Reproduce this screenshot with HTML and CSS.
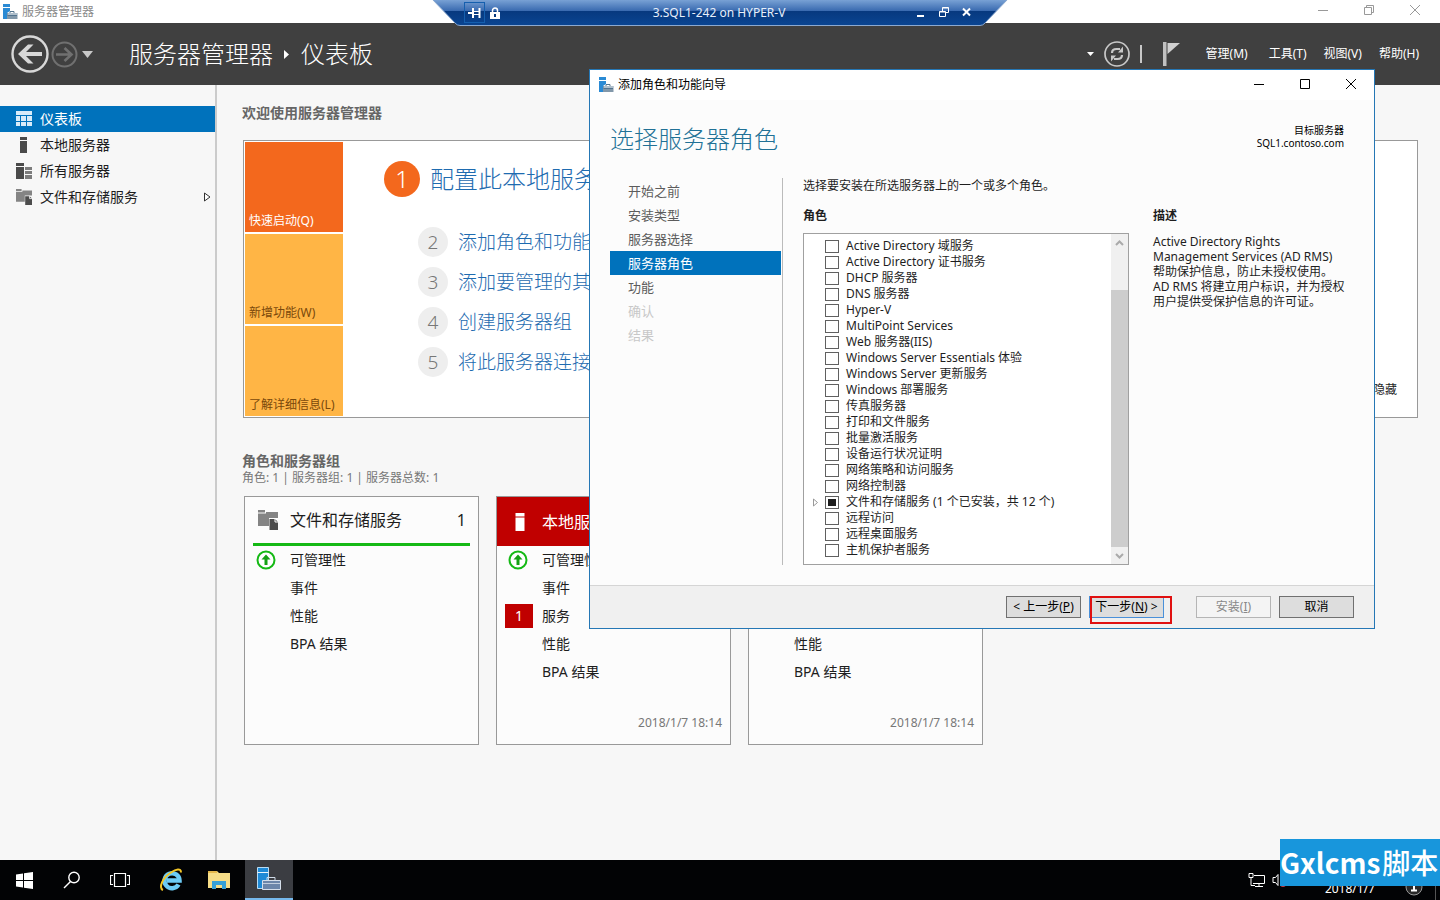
FILE: index.html
```html
<!DOCTYPE html>
<html lang="zh-CN">
<head>
<meta charset="utf-8">
<title>服务器管理器</title>
<link rel="stylesheet" href="styles.css">
</head>
<body>
<svg class="defs" aria-hidden="true">
  <symbol id="app" viewBox="0 0 16 16">
    <path d="M1 0h7v3H1z" fill="#2a8ad4"/><path d="M1 4h7v3L5 9v6H1z" fill="#2a8ad4"/>
    <path d="M5 9h10.500v6H5z" fill="#8298aa"/><path d="M5.500 11.500h9.500M8 9V7.500h4V9" fill="none" stroke="#53748f"/><path d="M6 10h9" stroke="#dce6ee"/>
  </symbol>
  <symbol id="storage" viewBox="0 0 20 20">
    <path d="M0 0h7v2.500H0zM0 3.500h8V2h12v6h-9v8H0z" fill="#848484"/>
    <path d="M11.500 9H17l3 3v8h-8.500z" fill="#4c4c4c"/><path d="M17 8.500V12h3.500" fill="none" stroke="#fff"/>
  </symbol>
  <symbol id="server" viewBox="0 0 8 16"><path d="M0 0h8v3H0zM0 4h8v12H0z" fill="currentColor"/></symbol>
  <symbol id="up" viewBox="0 0 20 20">
    <circle cx="10" cy="10" r="8.500" fill="#fff" stroke="#15b915" stroke-width="2"/>
    <path d="M10 4.500l4.500 5h-3V15h-3V9.500h-3z" fill="#15a015"/>
  </symbol>
</svg>

<div class="desktop">
  <header class="titlebar">
    <svg class="icon16" aria-hidden="true"><use href="#app"/></svg>
    <span class="titlebar-text">服务器管理器</span>
    <div class="win-controls">
      <button aria-label="最小化"><svg width="12" height="12"><path d="M1 6.500h10"/></svg></button>
      <button aria-label="还原"><svg width="12" height="12"><path d="M1.500 3.500h7v7h-7zM3.500 3V1.500h7v7H9"/></svg></button>
      <button aria-label="关闭"><svg width="12" height="12"><path d="M1 1l10 10M11 1L1 11"/></svg></button>
    </div>
  </header>

  <div class="rdp">
    <svg class="rdp-shape" viewBox="0 0 576 27" preserveAspectRatio="none" aria-hidden="true">
      <defs><linearGradient id="g" x1="0" y1="0" x2="0" y2="1">
        <stop offset="0" stop-color="#7ea6d8"/><stop offset=".46" stop-color="#3768ae"/>
        <stop offset=".47" stop-color="#07397f"/><stop offset="1" stop-color="#0a4592"/></linearGradient></defs>
      <path d="M0-1L23 23q2 2.500 5 2.500h520q3 0 5-2.500L576-1z" fill="url(#g)" stroke="#8ca9d0"/>
    </svg>
    <button class="pin" aria-label="固定"><svg width="13" height="10"><path d="M0 5h4M5 0v10M11.500 0v10" stroke="#fff" stroke-width="2" fill="none"/><path d="M5 3.500h6M5 6.500h6" stroke="#fff"/></svg></button>
    <svg class="lock" width="10" height="12" aria-hidden="true"><path d="M2.500 5V3.500a2.500 2.500 0 0 1 5 0V5" fill="none" stroke="#fff" stroke-width="1.500"/><path d="M0 5h10v7H0z" fill="#fff"/><path d="M4 7h2v3H4z" fill="#07397f"/></svg>
    <span class="rdp-title">3.SQL1-242 on HYPER-V</span>
    <div class="rdp-controls">
      <button aria-label="最小化连接"><svg width="10" height="12"><path d="M1 9h7" stroke="#fff" stroke-width="2"/></svg></button>
      <button aria-label="还原连接"><svg width="10" height="12"><path d="M.5 4.500h6v5h-6zM.5 5h6M3.500 4V.5h6v5H7M3.500 1h6" fill="none" stroke="#fff"/></svg></button>
      <button aria-label="断开连接"><svg width="10" height="12"><path d="M1 1.500l7 7M8 1.500l-7 7" stroke="#fff" stroke-width="2"/></svg></button>
    </div>
  </div>

  <div class="header">
    <button class="nav-back" aria-label="后退"><svg width="38" height="38"><circle cx="19" cy="19" r="17.500" fill="none" stroke="#d8d8d8" stroke-width="2.400"/><path d="M7 19L17 9.500h5.500L15 17h16v4H15l7.500 7.500H17z" fill="#d8d8d8"/></svg></button>
    <button class="nav-fwd" aria-label="前进"><svg width="27" height="27"><circle cx="13.500" cy="13.500" r="12" fill="none" stroke="#707070" stroke-width="2"/><path d="M5 13.500h15M13.500 7l7 6.500-7 6.500" fill="none" stroke="#707070" stroke-width="2.600"/></svg></button>
    <button class="nav-more" aria-label="历史记录"><svg width="11" height="7"><path d="M0 0h11L5.500 7z" fill="#c8c8c8"/></svg></button>
    <h1 class="crumbs"><span>服务器管理器</span><svg width="6" height="9" aria-hidden="true"><path d="M0 0l5 4.500L0 9z" fill="#fff"/></svg><span>仪表板</span></h1>
    <div class="header-tools">
      <button aria-label="更多"><svg width="7" height="4"><path d="M0 0h7L3.500 4z" fill="#fff"/></svg></button>
      <button aria-label="刷新"><svg width="26" height="26"><circle cx="13" cy="13" r="12" fill="none" stroke="#c8c8c8" stroke-width="1.700"/><path d="M8 12q0-4 4.500-4H16M18 14q0 4-4.500 4H10" fill="none" stroke="#c8c8c8" stroke-width="2.200"/><path d="M14 11.500h5v-6zM12 14.500H7v6z" fill="#c8c8c8"/></svg></button>
      <i class="tool-sep"></i>
      <button class="flag" aria-label="通知"><svg width="17" height="24"><path d="M0 0h3.500v24H0z" fill="#c0c0c0"/><path d="M4.500 1H17L4.500 12z" fill="#d0d0d0"/></svg></button>
    </div>
    <nav class="menu"><button class="first">管理(M)</button><button>工具(T)</button><button>视图(V)</button><button>帮助(H)</button></nav>
  </div>

  <div class="body">
    <nav class="sidebar">
      <a href="#" class="side active"><svg width="16" height="16" aria-hidden="true"><path d="M0 0h16v4H0zM0 5h4v5H0zM0 11h4v4H0zM5 5h5v5H5zM5 11h5v4H5zM11 5h5v5h-5zM11 11h5v4h-5z" fill="#d9ecf9"/></svg>仪表板</a>
      <a href="#" class="side"><svg width="16" height="16" viewBox="0 0 16 16" aria-hidden="true"><path d="M4 0h7v3H4zM4 4h7v12H4z" fill="#4a4a4a"/></svg>本地服务器</a>
      <a href="#" class="side"><svg width="16" height="16" viewBox="0 0 16 16" aria-hidden="true"><path d="M0 0h8v3H0zM0 4h8v12H0z" fill="#4a4a4a"/><path d="M9 4h7v3H9zM9 8h7v3H9zM9 12h7v4H9z" fill="#7c7c7c"/></svg>所有服务器</a>
      <a href="#" class="side"><svg width="16" height="16" aria-hidden="true"><use href="#storage"/></svg>文件和存储服务<svg class="chev" width="7" height="10" aria-hidden="true"><path d="M.5 1v8L6 5z" fill="#fff" stroke="#333"/></svg></a>
    </nav>
    <main class="content">
      <h2>欢迎使用服务器管理器</h2>
      <section class="welcome">
        <div class="tiles">
          <button class="tile hot">快速启动(Q)</button>
          <button class="tile">新增功能(W)</button>
          <button class="tile">了解详细信息(L)</button>
        </div>
        <ol class="steps">
          <li class="step big"><span class="num">1</span><a href="#">配置此本地服务器</a></li>
          <li class="step"><span class="num">2</span><a href="#">添加角色和功能</a></li>
          <li class="step"><span class="num">3</span><a href="#">添加要管理的其他服务器</a></li>
          <li class="step"><span class="num">4</span><a href="#">创建服务器组</a></li>
          <li class="step"><span class="num">5</span><a href="#">将此服务器连接到云服务</a></li>
        </ol>
        <button class="hide">隐藏</button>
      </section>
      <h2 class="groups-title">角色和服务器组</h2>
      <p class="groups-sub">角色: 1 | 服务器组: 1 | 服务器总数: 1</p>
      <div class="cards">
        <article class="card">
          <header class="card-head ok"><svg width="20" height="20" aria-hidden="true"><use href="#storage"/></svg><h3>文件和存储服务</h3><span>1</span></header>
          <ul><li><svg width="20" height="20" aria-hidden="true"><use href="#up"/></svg>可管理性</li><li>事件</li><li>性能</li><li>BPA 结果</li></ul>
        </article>
        <article class="card">
          <header class="card-head bad"><svg width="20" height="18" aria-hidden="true"><use href="#server"/></svg><h3>本地服务器</h3><span>1</span></header>
          <ul><li><svg width="20" height="20" aria-hidden="true"><use href="#up"/></svg>可管理性</li><li>事件</li><li><b class="alert">1</b>服务</li><li>性能</li><li>BPA 结果</li></ul>
          <time>2018/1/7 18:14</time>
        </article>
        <article class="card">
          <header class="card-head bad"><svg width="20" height="18" aria-hidden="true"><use href="#server"/></svg><h3>所有服务器</h3><span>1</span></header>
          <ul><li><svg width="20" height="20" aria-hidden="true"><use href="#up"/></svg>可管理性</li><li>事件</li><li><b class="alert">1</b>服务</li><li>性能</li><li>BPA 结果</li></ul>
          <time>2018/1/7 18:14</time>
        </article>
      </div>
    </main>
  </div>

  <footer class="taskbar">
    <button class="task" aria-label="开始"><svg width="17" height="17"><path d="M0 2.500L7 1.500V8H0zM8 1.300L17 0v8H8zM0 9h7v6.500L0 14.500zM8 9h9v8L8 15.700z" fill="#fff"/></svg></button>
    <button class="task" aria-label="搜索"><svg width="18" height="18"><circle cx="11" cy="6.500" r="5.200" fill="none" stroke="#fff" stroke-width="1.400"/><path d="M7.500 10.500L1 17" stroke="#fff" stroke-width="1.500"/></svg></button>
    <button class="task" aria-label="任务视图"><svg width="20" height="16"><path d="M4.500 1.500h11v13h-11zM3 3.500H.5v9H3M17 3.500h2.500v9H17" fill="none" stroke="#fff" stroke-width="1.200"/></svg></button>
    <button class="task" aria-label="Internet Explorer"><svg class="ie" width="24" height="24" viewBox="0 0 24 24"><path d="M19.500 16.500a7.500 7.500 0 1 1 1-4H8" fill="none" stroke="#6ccbf5" stroke-width="4.500"/><path d="M4 22C-1 20 4 9 12 4.500 17 1 22 0 22 4.500" fill="none" stroke="#f3c627" stroke-width="2"/></svg></button>
    <button class="task" aria-label="文件资源管理器"><svg class="folder" width="22" height="20"><path d="M0 1h9l2 2h11v15H0z" fill="#f6dd88"/><path d="M0 1h9v2H0z" fill="#e5b84c"/><path d="M4 19v-8h14v8h-4v-4H8v4z" fill="#36a0d8"/></svg></button>
    <button class="task current" aria-label="服务器管理器"><svg width="26" height="26"><path d="M1.500 1.500h11v21h-11z" fill="#1f8ad6" stroke="#b8dcf5"/><path d="M1.500 6.500h11" stroke="#e8f4fc"/><path d="M11 14v-2.500h8V14" fill="none" stroke="#cfdbe8"/><path d="M6.500 14.500h18v9h-18z" fill="#6c86aa" stroke="#d5deea"/><path d="M7 17.500h17" stroke="#c2cede"/></svg></button>
    <div class="tray">
      <svg width="18" height="14" aria-hidden="true"><path d="M1 .5h4v4H1zM3 5v7.500h4M6 2.500h10.500v8H5M11 10.500v3M7 13.500h8" fill="none" stroke="#fff"/></svg>
      <svg width="14" height="14" aria-hidden="true"><path d="M1 4.500h2.500L6 1.500v11L3.500 9.500H1z" fill="none" stroke="#fff"/><circle cx="11" cy="11" r="3" fill="#d33a45"/></svg>
      <time class="clock">2018/1/7</time>
      <svg class="notice" width="18" height="18" aria-hidden="true"><circle cx="9" cy="9" r="8" fill="#292929" stroke="#999"/><path d="M9 4v8M6.500 6L9 4M6 12.500h6" stroke="#fff" stroke-width="2"/></svg>
      <i class="peek"></i>
    </div>
  </footer>

  <div class="wizard" role="dialog" aria-label="添加角色和功能向导">
    <header class="wiz-title">
      <svg class="icon16" aria-hidden="true"><use href="#app"/></svg><span>添加角色和功能向导</span>
      <div class="win-controls dark">
        <button aria-label="最小化"><svg width="12" height="12"><path d="M1 6.500h10"/></svg></button>
        <button aria-label="最大化"><svg width="12" height="12"><path d="M1.500 1.500h9v9h-9z"/></svg></button>
        <button aria-label="关闭"><svg width="12" height="12"><path d="M1 1l10 10M11 1L1 11"/></svg></button>
      </div>
    </header>
    <div class="wiz-main">
      <div class="wiz-head">
        <h2>选择服务器角色</h2>
        <div class="target">目标服务器<br>SQL1.contoso.com</div>
      </div>
      <div class="wiz-cols">
        <nav class="wiz-nav">
          <a href="#">开始之前</a><a href="#">安装类型</a><a href="#">服务器选择</a><a href="#" class="sel">服务器角色</a><a href="#">功能</a><span>确认</span><span>结果</span>
        </nav>
        <div class="wiz-pane">
          <p class="lead">选择要安装在所选服务器上的一个或多个角色。</p>
          <div class="pane-cols">
            <section class="roles">
              <h3>角色</h3>
              <div class="listbox">
                <div class="list">
                  <label><input type="checkbox">Active Directory 域服务</label>
                  <label><input type="checkbox">Active Directory 证书服务</label>
                  <label><input type="checkbox">DHCP 服务器</label>
                  <label><input type="checkbox">DNS 服务器</label>
                  <label><input type="checkbox">Hyper-V</label>
                  <label><input type="checkbox">MultiPoint Services</label>
                  <label><input type="checkbox">Web 服务器(IIS)</label>
                  <label><input type="checkbox">Windows Server Essentials 体验</label>
                  <label><input type="checkbox">Windows Server 更新服务</label>
                  <label><input type="checkbox">Windows 部署服务</label>
                  <label><input type="checkbox">传真服务器</label>
                  <label><input type="checkbox">打印和文件服务</label>
                  <label><input type="checkbox">批量激活服务</label>
                  <label><input type="checkbox">设备运行状况证明</label>
                  <label><input type="checkbox">网络策略和访问服务</label>
                  <label><input type="checkbox">网络控制器</label>
                  <label class="tree"><svg width="6" height="9" aria-hidden="true"><path d="M.5 1v7L4.500 4.500z" fill="none" stroke="#999"/></svg><input type="checkbox" checked>文件和存储服务 (1 个已安装，共 12 个)</label>
                  <label><input type="checkbox">远程访问</label>
                  <label><input type="checkbox">远程桌面服务</label>
                  <label><input type="checkbox">主机保护者服务</label>
                </div>
                <div class="scroll">
                  <button aria-label="向上滚动"><svg width="9" height="6"><path d="M1 5l3.500-3.500L8 5"/></svg></button>
                  <div class="track"><div class="thumb"></div></div>
                  <button aria-label="向下滚动"><svg width="9" height="6"><path d="M1 1l3.500 3.500L8 1"/></svg></button>
                </div>
              </div>
            </section>
            <section class="desc">
              <h3>描述</h3>
              <p>Active Directory Rights<br>Management Services (AD RMS)<br>帮助保护信息，防止未授权使用。<br>AD RMS 将建立用户标识，并为授权<br>用户提供受保护信息的许可证。</p>
            </section>
          </div>
        </div>
      </div>
    </div>
    <footer class="wiz-foot">
      <button class="btn">&lt; 上一步(<u>P</u>)</button>
      <div class="next-wrap"><button class="btn default">下一步(<u>N</u>) &gt;</button><i class="mark"></i></div>
      <button class="btn install" disabled>安装(<u>I</u>)</button>
      <button class="btn">取消</button>
    </footer>
  </div>

  <div class="watermark">Gxlcms<span>脚本</span></div>
</div>
</body>
</html>
```
FILE: styles.css
```css
* { box-sizing: border-box; }
body, h1, h2, h3, p, ul, ol { margin: 0; padding: 0; }
body {
  font-family: "Noto Sans", "Noto Sans CJK SC", sans-serif;
  font-size: 12px;
  line-height: 16px;
  color: #1e1e1e;
  background: #f7f7f7;
}
ul, ol { list-style: none; }
a { color: inherit; text-decoration: none; }
button { font: inherit; color: inherit; background: none; border: 0; padding: 0; }
svg { display: block; flex: none; }
.defs { position: absolute; width: 0; height: 0; }
.icon16 { width: 16px; height: 16px; }

.desktop { position: relative; display: flex; flex-direction: column; min-height: 100vh; overflow: hidden; }

.titlebar { display: flex; align-items: center; gap: 4px; height: 23px; padding-left: 2px; background: #fff; color: #8a8a8a; }
.win-controls { display: flex; gap: 34px; margin-left: auto; padding-right: 19px; padding-bottom: 3px; }
.win-controls svg { fill: none; stroke: #999; }
.win-controls.dark svg { stroke: #000; }

.rdp { position: absolute; top: 0; left: 30%; width: 40%; height: 27px; display: flex; align-items: center; padding: 0 36px 2px 32px; color: #e8effa; }
.rdp-shape { position: absolute; inset: 0; width: 100%; height: 27px; }
.rdp > :not(.rdp-shape) { position: relative; }
.pin { display: flex; align-items: center; justify-content: center; width: 21px; height: 21px; border: 1px solid #155fae; margin-right: 5px; }
.rdp-title { flex: 1; padding-left: 22px; text-align: center; }
.rdp-controls { display: flex; gap: 13px; }

.header { display: flex; align-items: center; height: 62px; padding: 0 21px 0 11px; background: #404040; color: #fff; }
.nav-fwd { margin-left: 2px; }
.nav-more { margin-left: 4px; }
.crumbs { display: flex; align-items: center; gap: 11px; margin-left: 36px; font-size: 24px; line-height: 32px; font-weight: 300; }
.header-tools { display: flex; align-items: center; gap: 10px; margin-left: auto; }
.tool-sep { width: 2px; height: 18px; background: #c8c8c8; }
.flag { margin-left: 11px; }
.menu { display: flex; gap: 17px; margin-left: 26px; }
.menu .first { margin-right: 4px; }

.body { display: flex; flex: 1; }
.sidebar { width: 217px; border-right: 2px solid #cbcbcb; padding-top: 21px; font-size: 14px; }
.side { display: flex; align-items: center; gap: 8px; height: 26px; padding: 0 4px 0 16px; }
.side.active { background: #0072bc; color: #fff; }
.chev { margin-left: auto; }

.content { flex: 1; padding: 19px 22px 0 25px; }
h2 { font-size: 14px; line-height: 18px; color: #666; }
.welcome { position: relative; display: flex; margin: 18px 0 0 1px; border: 1px solid #999; background: #fff; padding: 1px; }
.tiles { display: flex; flex-direction: column; gap: 2px; width: 98px; }
.tile { display: flex; align-items: flex-end; height: 90px; padding: 0 0 3px 4px; background: #ffb545; color: #79480b; }
.tile.hot { background: #f3681d; color: #fff; }
.steps { padding: 19px 0 0 41px; color: #1e6bb0; font-weight: 300; }
.step { display: flex; align-items: center; gap: 10px; height: 40px; padding-left: 34px; font-size: 19px; line-height: 28px; }
.num { display: flex; align-items: center; justify-content: center; width: 30px; height: 30px; border-radius: 50%; background: #eee; color: #777; }
.step.big { height: 36px; margin-bottom: 25px; padding-left: 0; font-size: 24px; }
.big .num { width: 36px; height: 36px; background: #f3681d; color: #fff; }
.hide { position: absolute; right: 20px; bottom: 19px; }
.groups-title { margin-top: 34px; }
.groups-sub { color: #777; }
.cards { display: flex; gap: 17px; margin: 10px 0 0 2px; }
.card { display: flex; flex-direction: column; width: 235px; height: 249px; border: 1px solid #999; background: #fcfcfc; }
.card-head { display: flex; align-items: center; gap: 12px; height: 49px; font-size: 16px; }
.card-head h3 { flex: 1; font-size: 16px; font-weight: 400; line-height: 24px; }
.card-head.ok { margin: 0 8px; padding: 0 4px 0 5px; border-bottom: 3px solid #15b915; }
.card-head.bad { padding: 0 13px; background: #c00000; color: #fff; }
.card li { position: relative; height: 28px; padding-left: 45px; font-size: 14px; line-height: 28px; }
.card li svg { position: absolute; left: 11px; top: 4px; }
.alert { position: absolute; left: 8px; top: 2px; width: 28px; height: 24px; background: #c00000; color: #fff; font-weight: 400; line-height: 24px; text-align: center; }
.card time { margin: auto 8px 13px auto; color: #777; }

.taskbar { display: flex; height: 40px; background: #020305; color: #fff; }
.task { display: flex; align-items: center; justify-content: center; width: 48px; height: 40px; }
.task .ie, .task .folder { margin-left: 5px; }
.task.current { width: 48px; margin-left: 5px; background: #3b3d42; border-bottom: 2px solid #76b9ed; }
.tray { display: flex; align-items: center; gap: 6px; margin-left: auto; }
.clock { margin: 18px 24px 0 33px; }
.notice { margin-top: 14px; }
.peek { width: 1px; height: 40px; margin-left: 6px; margin-right: 4px; background: #555; }

.wizard { position: absolute; top: 69px; left: 589px; width: 786px; display: flex; flex-direction: column; border: 1px solid #2577b5; background: #fcfcfc; }
.wiz-title { display: flex; align-items: center; gap: 4px; height: 30px; padding-left: 8px; background: #fff; color: #000; }
.wiz-title .win-controls { padding-right: 17px; padding-bottom: 2px; }
.wiz-main { padding: 22px 20px 20px; }
.wiz-head { display: flex; justify-content: space-between; }
.wiz-head h2 { font-size: 24px; line-height: 34px; font-weight: 300; color: #217196; }
.target { padding: 2px 10px 0 0; font-size: 10px; line-height: 13px; text-align: right; color: #000; }
.wiz-cols { display: flex; margin-top: 22px; }
.wiz-nav { display: flex; flex-direction: column; width: 173px; padding: 1px 1px 0 0; border-right: 1px solid #bbb; font-size: 13px; line-height: 24px; color: #5c5c5c; }
.wiz-nav > * { padding-left: 18px; }
.wiz-nav span { color: #c8c8c8; }
.wiz-nav .sel { background: #0072bc; color: #fff; }
.wiz-pane { flex: 1; padding-left: 20px; }
.lead { margin-bottom: 14px; }
.pane-cols { display: flex; gap: 24px; }
.roles { width: 326px; }
.pane-cols h3 { font-size: 12px; line-height: 16px; }
.listbox { display: flex; height: 332px; margin-top: 9px; border: 1px solid #a0a0a0; background: #fff; }
.list { flex: 1; padding: 4px 0 0 21px; }
.list label { position: relative; display: flex; align-items: center; gap: 7px; height: 16px; white-space: nowrap; }
.list input { appearance: none; width: 14px; height: 13px; margin: 0; border: 1px solid #606060; background: #fff; }
.list input:checked { background: #1e1e1e; background-clip: content-box; padding: 2px; }
.tree svg { position: absolute; left: -12px; top: 4px; }
.scroll { display: flex; flex-direction: column; width: 17px; background: #f0f0f0; }
.scroll button { display: flex; align-items: center; justify-content: center; height: 17px; }
.scroll svg { fill: none; stroke: #aaa; stroke-width: 2; }
.track { flex: 1; display: flex; flex-direction: column; }
.thumb { flex: 1; margin-top: 39px; background: #cdcdcd; }
.desc { flex: 1; white-space: nowrap; }
.desc p { margin-top: 10px; line-height: 15px; }
.wiz-foot { display: flex; justify-content: flex-end; gap: 8px; height: 43px; padding: 10px 20px 0; border-top: 1px solid #d5d5d5; background: #f0f0f0; }
.btn { width: 75px; height: 22px; border: 1px solid #707070; background: #ddd; color: #000; white-space: nowrap; }
.btn.default { border-color: #4a90d9; }
.btn.install { margin-left: 24px; border-color: #b5b5b5; background: #f4f4f4; color: #888; }
.next-wrap { position: relative; }
.mark { position: absolute; left: 1px; top: 0; width: 82px; height: 28px; border: 2px solid #e01010; }

.watermark { position: absolute; right: 0; bottom: 14px; display: flex; align-items: center; gap: 2px; width: 160px; height: 47px; overflow: hidden; background: #1896dc; color: #fff; font-family: "Noto Sans CJK SC", sans-serif; font-size: 28px; line-height: 47px; font-weight: 700; white-space: nowrap; }
.watermark span { font-weight: 500; }
```
